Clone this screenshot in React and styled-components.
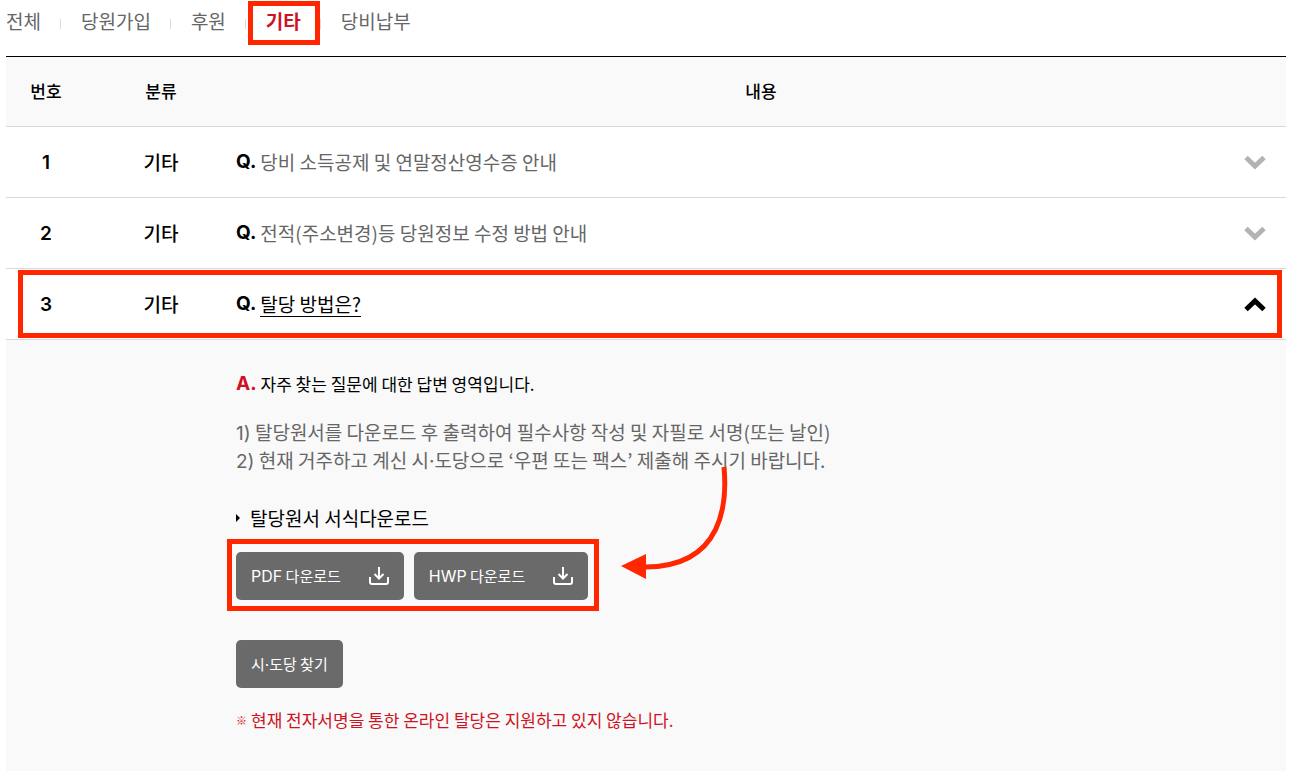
import React, { useState } from "react";
import styled, { createGlobalStyle, css } from "styled-components";

const GlobalStyle = createGlobalStyle`
  *, *::before, *::after { box-sizing: border-box; }
  body {
    margin: 0;
    background: #fff;
    color: #000;
    font-family: "Noto Sans CJK KR", "Noto Sans", sans-serif;
    font-size: 19px;
    line-height: 28px;
  }
  button { font: inherit; color: inherit; border: 0; cursor: pointer; }
  p, h3, ul { margin: 0; padding: 0; }
`;

const Page = styled.main`
  padding: 0 8px 0 6px;
`;

const highlight = css`
  content: "";
  position: absolute;
  border: 5px solid #ff2600;
  pointer-events: none;
`;

const Tabs = styled.ul`
  display: flex;
  list-style: none;
  padding: 7px 0 21px;
`;

const TabItem = styled.li`
  display: flex;
  align-items: center;

  & + &::before {
    content: "";
    width: 1px;
    height: 10px;
    margin: 6px 20px 0 19px;
    background: #ddd;
  }
`;

const TabLink = styled.a`
  position: relative;
  text-decoration: none;
  color: ${(p) => (p.$active ? "#cf1124" : "#666")};
  font-weight: ${(p) => (p.$active ? 700 : 400)};

  ${(p) =>
    p.$active &&
    css`
      &::after {
        ${highlight}
        inset: -6px -19px -10px -18px;
      }
    `}
`;

const Table = styled.table`
  width: 100%;
  table-layout: fixed;
  border-collapse: separate;
  border-spacing: 0;
  border-top: 1px solid #000;
`;

const HeadCell = styled.th`
  height: 70px;
  padding: 0 0 2px;
  width: ${(p) => p.$width || "auto"};
  background: #f9f9f9;
  border-bottom: 1px solid #d9d9d9;
  font-size: 17px;
  font-weight: 500;
`;

const Row = styled.tr`
  position: relative;
`;

const Cell = styled.td`
  height: 71px;
  padding: 0;
  text-align: center;
  font-weight: 500;
  border-bottom: 1px solid #d9d9d9;

  ${(p) =>
    p.$marked &&
    css`
      &::after {
        ${highlight}
        inset: 1px 4px 2px 12px;
      }
    `}
`;

const Latin = styled.span`
  font-family: Inter, sans-serif;
  font-size: ${(p) => p.$size || 19}px;
  font-weight: ${(p) => p.$weight || "inherit"};
`;

const QuestionButton = styled.button`
  display: flex;
  align-items: center;
  width: 100%;
  height: 70px;
  padding: 0 20px 0 0;
  gap: 4px;
  background: none;
  text-align: left;
`;

const QuestionText = styled.span`
  line-height: 24px;
  font-weight: 400;
  color: ${(p) => (p.$open ? "#000" : "#666")};
  border-bottom: 1px solid ${(p) => (p.$open ? "#000" : "transparent")};
`;

const Chevron = styled.svg`
  margin-left: auto;
  color: ${(p) => (p.$open ? "#000" : "#b3b3b3")};
  transform: ${(p) => (p.$open ? "rotate(180deg)" : "none")};
`;

const AnswerCell = styled.td`
  padding: 30px 20px 48px 230px;
  background: #f9f9f9;
`;

const Answer = styled.div`
  position: relative;
`;

const AnswerTitle = styled.p`
  display: flex;
  align-items: center;
  gap: 4px;
  font-size: 17px;
`;

const AnswerMark = styled(Latin)`
  color: #cf1124;
`;

const Steps = styled.ul`
  margin-top: 20px;
  list-style: none;
  color: #666;
`;

const Step = styled.li`
  height: 28px;
`;

const FormTitle = styled.h3`
  display: flex;
  align-items: center;
  gap: 10px;
  margin-top: 30px;
  font-size: 19px;
  font-weight: 400;
`;

const Bullet = styled.span`
  border-left: 4px solid #000;
  border-top: 4px solid transparent;
  border-bottom: 4px solid transparent;
`;

const Downloads = styled.div`
  position: relative;
  display: flex;
  width: fit-content;
  gap: 10px;
  margin: 20px 0 40px;

  &::after {
    ${highlight}
    inset: -13px -11px -11px -9px;
  }
`;

const ActionButton = styled.button`
  display: flex;
  align-items: center;
  gap: 28px;
  height: 48px;
  padding: 0 15px;
  border-radius: 5px;
  background: #6a6a6a;
  color: #fff;
  font-size: 15px;
`;

const Notice = styled.p`
  display: flex;
  align-items: center;
  gap: 4px;
  margin-top: 18px;
  font-size: 17px;
  color: #cf1124;
`;

const NoticeMark = styled.span`
  font-size: 11px;
  font-weight: 700;
`;

const Arrow = styled.svg`
  position: absolute;
  left: 384px;
  top: 96px;
  pointer-events: none;
`;

function DownloadIcon() {
  return (
    <svg width="20" height="18" viewBox="0 0 20 18" fill="none" stroke="#fff" strokeWidth="2" aria-hidden="true">
      <path d="M1 10v5a2 2 0 0 0 2 2h14a2 2 0 0 0 2-2v-5" />
      <path d="M10 0v11M5.5 7l4.5 4.5L14.5 7" />
    </svg>
  );
}

function ChevronIcon({ open }) {
  return (
    <Chevron $open={open} width="22" height="15" viewBox="0 0 22 15" fill="none" aria-hidden="true">
      <path d="M2 2.5L11 11L20 2.5" stroke="currentColor" strokeWidth="5" />
    </Chevron>
  );
}

const tabs = ["전체", "당원가입", "후원", "기타", "당비납부"];

const questions = [
  { id: 1, category: "기타", text: "당비 소득공제 및 연말정산영수증 안내" },
  { id: 2, category: "기타", text: "전적(주소변경)등 당원정보 수정 방법 안내" },
  { id: 3, category: "기타", text: "탈당 방법은?", answer: WithdrawalAnswer },
];

function WithdrawalAnswer() {
  return (
    <Answer>
      <AnswerTitle>
        <AnswerMark $weight={700}>A.</AnswerMark>
        자주 찾는 질문에 대한 답변 영역입니다.
      </AnswerTitle>
      <Steps>
        <Step>
          <Latin>1)</Latin> 탈당원서를 다운로드 후 출력하여 필수사항 작성 및 자필로 서명(또는 날인)
        </Step>
        <Step>
          <Latin>2)</Latin> 현재 거주하고 계신 시<Latin>·</Latin>도당으로 ‘우편 또는 팩스’ 제출해 주시기 바랍니다.
        </Step>
      </Steps>
      <FormTitle>
        <Bullet />
        탈당원서 서식다운로드
      </FormTitle>
      <Downloads>
        {["PDF", "HWP"].map((kind) => (
          <ActionButton key={kind} type="button">
            <span>
              <Latin $size={16}>{kind}</Latin> 다운로드
            </span>
            <DownloadIcon />
          </ActionButton>
        ))}
      </Downloads>
      <ActionButton type="button">
        <span>
          시<Latin $size={15}>·</Latin>도당 찾기
        </span>
      </ActionButton>
      <Notice>
        <NoticeMark>※</NoticeMark>
        현재 전자서명을 통한 온라인 탈당은 지원하고 있지 않습니다.
      </Notice>
      <Arrow width="110" height="116" viewBox="0 0 110 116" fill="none" aria-hidden="true">
        <path d="M104 1C107 34 105 101 25 101" stroke="#ff2600" strokeWidth="5" />
        <path d="M1 100L26 88V113Z" fill="#ff2600" />
      </Arrow>
    </Answer>
  );
}

export default function App() {
  const [openId, setOpenId] = useState(3);

  return (
    <>
      <GlobalStyle />
      <Page>
        <nav>
          <Tabs>
            {tabs.map((tab) => (
              <TabItem key={tab}>
                <TabLink href="#" $active={tab === "기타"}>
                  {tab}
                </TabLink>
              </TabItem>
            ))}
          </Tabs>
        </nav>
        <Table>
          <thead>
            <tr>
              <HeadCell scope="col" $width="80px">번호</HeadCell>
              <HeadCell scope="col" $width="150px">분류</HeadCell>
              <HeadCell scope="col">내용</HeadCell>
            </tr>
          </thead>
          <tbody>
            {questions.map(({ id, category, text, answer: AnswerBody }) => {
              const open = id === openId;
              return (
                <React.Fragment key={id}>
                  <Row>
                    <Cell>
                      <Latin $weight={600}>{id}</Latin>
                    </Cell>
                    <Cell>{category}</Cell>
                    <Cell $marked={id === 3}>
                      <QuestionButton
                        type="button"
                        aria-expanded={open}
                        onClick={() => setOpenId(open ? null : id)}
                      >
                        <Latin $weight={700}>Q.</Latin>
                        <QuestionText $open={open}>{text}</QuestionText>
                        <ChevronIcon open={open} />
                      </QuestionButton>
                    </Cell>
                  </Row>
                  {open && AnswerBody && (
                    <tr>
                      <AnswerCell colSpan={3}>
                        <AnswerBody />
                      </AnswerCell>
                    </tr>
                  )}
                </React.Fragment>
              );
            })}
          </tbody>
        </Table>
      </Page>
    </>
  );
}
